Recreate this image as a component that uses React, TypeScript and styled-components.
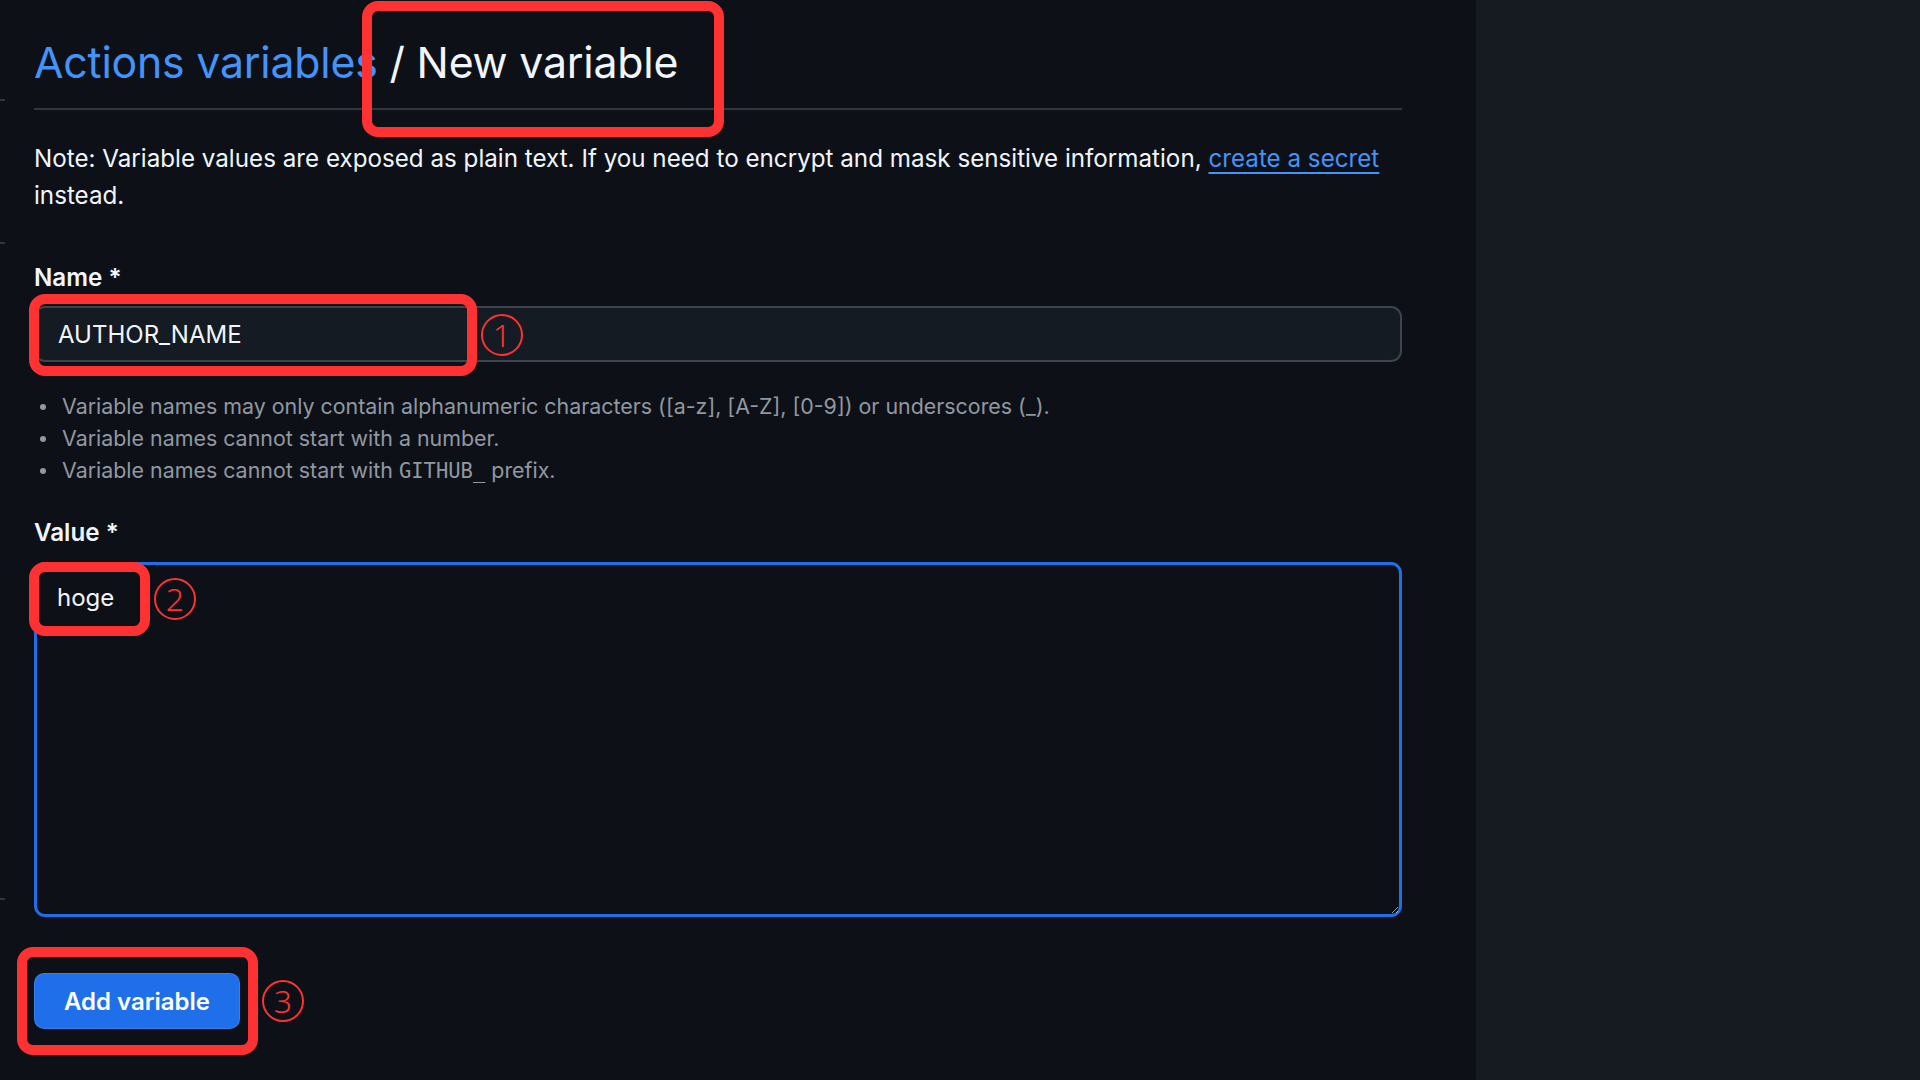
import React from "react";
import styled, { createGlobalStyle } from "styled-components";

const GlobalStyle = createGlobalStyle`
  html, body {
    margin: 0;
    padding: 0;
    background: #0d1117;
  }
  body {
    font-family: Inter, "Noto Sans", "Liberation Sans", sans-serif;
    color: #f0f6fc;
  }
  * { box-sizing: border-box; }
`;

const Page = styled.div`
  display: flex;
  width: 1920px;
  height: 1080px;
  overflow: hidden;
`;

const Main = styled.main`
  position: relative;
  width: 1476px;
  flex: none;
  background: #0d1117;
  padding: 31px 74px 0 34px;
  display: flex;
  flex-direction: column;
`;

const Aside = styled.aside`
  flex: 1;
  background: #161b22;
`;

const Header = styled.header`
  padding-bottom: 14px;
  border-bottom: 2px solid #30363d;
`;

const Title = styled.h1`
  margin: 0;
  font-size: 42.8px;
  line-height: 63px;
  font-weight: 400;
  color: #f0f6fc;
  letter-spacing: -0.2px;
`;

const Crumb = styled.a`
  color: #4493f8;
  text-decoration: none;
`;

const Note = styled.p`
  margin: 30px 0 0;
  font-size: 24.2px;
  line-height: 37px;
  color: #f0f6fc;
`;

const InlineLink = styled.a`
  color: #4493f8;
  text-decoration: underline;
  text-underline-offset: 5px;
  text-decoration-thickness: 2px;
`;

const Label = styled.label<{ $gap: number }>`
  display: block;
  margin-top: ${(p) => p.$gap}px;
  font-size: 24.2px;
  line-height: 37px;
  font-weight: 600;
  color: #f0f6fc;
`;

const TextInput = styled.input`
  display: block;
  margin-top: 10px;
  width: 100%;
  height: 56px;
  padding: 0 22px;
  background: #151b23;
  border: 2px solid #3d444d;
  border-radius: 11px;
  color: #f0f6fc;
  font-family: inherit;
  font-size: 24px;
  outline: none;
`;

const Hints = styled.ul`
  margin: 28px 0 0;
  padding: 0 0 0 28px;
  list-style: none;
  display: flex;
  flex-direction: column;
`;

const Hint = styled.li`
  position: relative;
  font-size: 21.4px;
  line-height: 32px;
  color: #9198a1;
  &::before {
    content: "";
    position: absolute;
    left: -22px;
    top: 14px;
    width: 6px;
    height: 6px;
    border-radius: 50%;
    background: #9198a1;
  }
`;

const Code = styled.code`
  font-family: "DejaVu Sans Mono", "Liberation Mono", monospace;
  font-size: 20.5px;
`;

const TextArea = styled.textarea`
  display: block;
  margin-top: 11px;
  width: 100%;
  height: 355px;
  padding: 16px 20px;
  background: #0d1117;
  border: 3px solid #1f6feb;
  border-radius: 11px;
  color: #f0f6fc;
  font-family: inherit;
  font-size: 24px;
  line-height: 34px;
  outline: none;
  resize: vertical;
`;

const Actions = styled.div`
  margin-top: 56px;
  display: flex;
`;

const PrimaryButton = styled.button`
  height: 56px;
  padding: 0 29px;
  background: #1f6feb;
  border: 1px solid rgba(240, 246, 252, 0.12);
  border-radius: 10px;
  color: #ffffff;
  font-family: inherit;
  font-size: 24px;
  font-weight: 600;
  cursor: pointer;
`;

/* Red screenshot annotations lying over the form */
const Annotation = styled.div<{ $x: number; $y: number }>`
  position: absolute;
  left: ${(p) => p.$x}px;
  top: ${(p) => p.$y}px;
  display: flex;
  align-items: center;
  gap: 4px;
  pointer-events: none;
`;

const Frame = styled.div<{ $w: number; $h: number }>`
  width: ${(p) => p.$w}px;
  height: ${(p) => p.$h}px;
  border: 10px solid #fe3232;
  border-radius: 16px;
`;

const Badge = styled.div`
  width: 42px;
  height: 42px;
  border: 2px solid #fe3232;
  border-radius: 50%;
  display: flex;
  align-items: center;
  justify-content: center;
  color: #fe3232;
  font-family: "Noto Sans", sans-serif;
  font-size: 32px;
  font-weight: 300;
  line-height: 1;
  padding-bottom: 1px;
`;

const EdgeTicks = styled.div`
  position: absolute;
  left: 0;
  top: 99px;
  display: flex;
  flex-direction: column;
`;

const Tick = styled.span<{ $gap: number }>`
  display: block;
  margin-top: ${(p) => p.$gap}px;
  width: 5px;
  height: 2px;
  background: #30363d;
`;

export default function App() {
  return (
    <>
      <GlobalStyle />
      <Page>
        <Main>
          <Header>
            <Title>
              <Crumb href="#">Actions variables</Crumb> / New variable
            </Title>
          </Header>
          <Note>
            Note: Variable values are exposed as plain text. If you need to encrypt and mask sensitive
            information, <InlineLink href="#">create a secret</InlineLink> instead.
          </Note>

          <Label $gap={45} htmlFor="name">Name *</Label>
          <TextInput id="name" defaultValue="AUTHOR_NAME" />
          <Hints>
            <Hint>
              Variable names may only contain alphanumeric characters ([a-z], [A-Z], [0-9]) or
              underscores (_).
            </Hint>
            <Hint>Variable names cannot start with a number.</Hint>
            <Hint>
              Variable names cannot start with <Code>GITHUB_</Code> prefix.
            </Hint>
          </Hints>

          <Label $gap={27} htmlFor="value">Value *</Label>
          <TextArea id="value" defaultValue="hoge" />

          <Actions>
            <PrimaryButton type="button">Add variable</PrimaryButton>
          </Actions>

          <EdgeTicks>
            <Tick $gap={0} />
            <Tick $gap={141} />
            <Tick $gap={654} />
          </EdgeTicks>

          <Annotation $x={362} $y={1}>
            <Frame $w={362} $h={136} />
          </Annotation>
          <Annotation $x={29} $y={294}>
            <Frame $w={448} $h={82} />
            <Badge>1</Badge>
          </Annotation>
          <Annotation $x={29} $y={562}>
            <Frame $w={121} $h={74} />
            <Badge>2</Badge>
          </Annotation>
          <Annotation $x={17} $y={947}>
            <Frame $w={241} $h={108} />
            <Badge>3</Badge>
          </Annotation>
        </Main>
        <Aside />
      </Page>
    </>
  );
}
